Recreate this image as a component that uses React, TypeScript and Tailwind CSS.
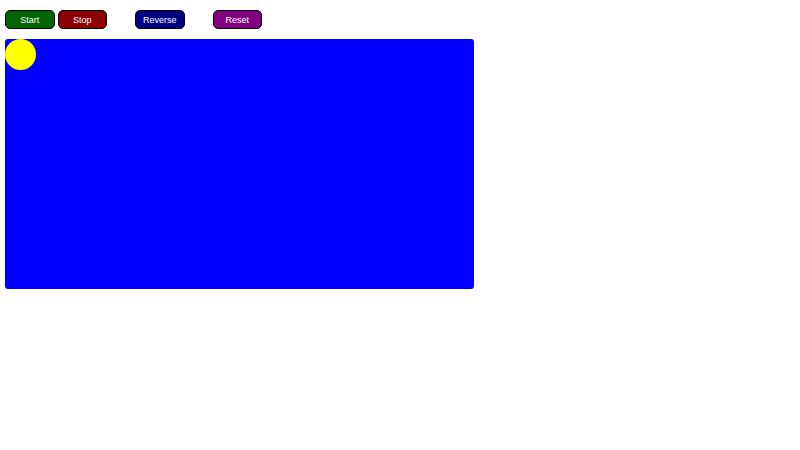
import React from "react";

export default function App() {
  const btn =
    "h-[19px] w-[49.5px] rounded-[5px] border border-black text-white text-[9px] leading-none pt-[1px] flex items-center justify-center";
  return (
    <div className="w-[800px] h-[450px] bg-white pt-[10px] pl-[5px]" style={{ fontFamily: '"Liberation Sans", Arial, sans-serif' }}>
      <div className="flex">
        <button className={`${btn} bg-[#006400]`}>Start</button>
        <button className={`${btn} bg-[#8b0000] ml-[3px]`}>Stop</button>
        <button className={`${btn} bg-[#000080] ml-[28px]`}>Reverse</button>
        <button className={`${btn} bg-[#800080] ml-[28px]`}>Reset</button>
      </div>
      <div className="mt-[10px] w-[469px] h-[250px] bg-[#0000ff] rounded-[3px] relative">
        <div className="absolute left-0 top-0 w-[31px] h-[31px] rounded-full bg-[#ffff00]" />
      </div>
    </div>
  );
}
